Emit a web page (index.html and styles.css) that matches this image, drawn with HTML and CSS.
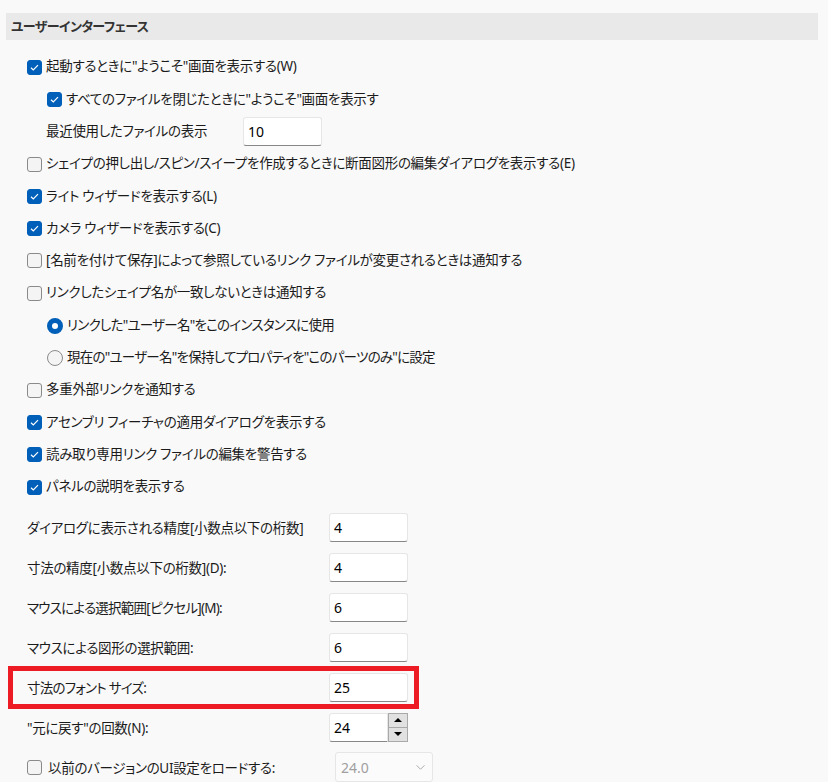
FILE: index.html
```
<!DOCTYPE html>
<html lang="ja">
<head>
<meta charset="utf-8">
<title>ユーザーインターフェース</title>
<link rel="stylesheet" href="styles.css">
</head>
<body>
<div class="panel">
  <div class="section-title">ユーザーインターフェース</div>
  <div class="options">
    <div class="row"><span class="cb on"><svg viewBox="0 0 15 15"><path d="M4 7.8 L6.3 10 L11 5.2"/></svg></span><span class="txt">起動するときに"ようこそ"画面を表示する(W)</span></div>
    <div class="row sub"><span class="cb on"><svg viewBox="0 0 15 15"><path d="M4 7.8 L6.3 10 L11 5.2"/></svg></span><span class="txt">すべてのファイルを閉じたときに"ようこそ"画面を表示す</span></div>
    <div class="row sub2"><span class="txt recent-label">最近使用したファイルの表示</span><span class="input recent">10</span></div>
    <div class="row"><span class="cb"></span><span class="txt">シェイプの押し出し/スピン/スイープを作成するときに断面図形の編集ダイアログを表示する(E)</span></div>
    <div class="row"><span class="cb on"><svg viewBox="0 0 15 15"><path d="M4 7.8 L6.3 10 L11 5.2"/></svg></span><span class="txt">ライト ウィザードを表示する(L)</span></div>
    <div class="row"><span class="cb on"><svg viewBox="0 0 15 15"><path d="M4 7.8 L6.3 10 L11 5.2"/></svg></span><span class="txt">カメラ ウィザードを表示する(C)</span></div>
    <div class="row"><span class="cb"></span><span class="txt">[名前を付けて保存]によって参照しているリンク ファイルが変更されるときは通知する</span></div>
    <div class="row"><span class="cb"></span><span class="txt">リンクしたシェイプ名が一致しないときは通知する</span></div>
    <div class="row sub"><span class="rb on"></span><span class="txt tight">リンクした"ユーザー名"をこのインスタンスに使用</span></div>
    <div class="row sub"><span class="rb"></span><span class="txt tight">現在の"ユーザー名"を保持してプロパティを"このパーツのみ"に設定</span></div>
    <div class="row"><span class="cb"></span><span class="txt">多重外部リンクを通知する</span></div>
    <div class="row"><span class="cb on"><svg viewBox="0 0 15 15"><path d="M4 7.8 L6.3 10 L11 5.2"/></svg></span><span class="txt">アセンブリ フィーチャの適用ダイアログを表示する</span></div>
    <div class="row"><span class="cb on"><svg viewBox="0 0 15 15"><path d="M4 7.8 L6.3 10 L11 5.2"/></svg></span><span class="txt">読み取り専用リンク ファイルの編集を警告する</span></div>
    <div class="row"><span class="cb on"><svg viewBox="0 0 15 15"><path d="M4 7.8 L6.3 10 L11 5.2"/></svg></span><span class="txt">パネルの説明を表示する</span></div>
  </div>
  <div class="fields">
    <div class="field"><span class="flabel">ダイアログに表示される精度[小数点以下の桁数]</span><span class="input">4</span></div>
    <div class="field"><span class="flabel">寸法の精度[小数点以下の桁数](D):</span><span class="input">4</span></div>
    <div class="field"><span class="flabel tight">マウスによる選択範囲[ピクセル](M):</span><span class="input">6</span></div>
    <div class="field"><span class="flabel">マウスによる図形の選択範囲:</span><span class="input">6</span></div>
    <div class="field highlight"><span class="flabel tight">寸法のフォント サイズ:</span><span class="input">25</span></div>
    <div class="field"><span class="flabel">"元に戻す"の回数(N):</span><span class="spin"><span class="input spin-text">24</span><span class="spin-btns"><span class="sbtn"><span class="tri up"></span></span><span class="sbtn"><span class="tri down"></span></span></span></span></div>
    <div class="field last"><span class="cb"></span><span class="flabel last-label">以前のバージョンのUI設定をロードする:</span><span class="select">24.0<svg class="chev" viewBox="0 0 12 8"><path d="M1.5 1.5 L6 6 L10.5 1.5"/></svg></span></div>
  </div>
</div>
</body>
</html>
```
FILE: styles.css
```
html { overflow: hidden; }
body {
  margin: 0;
  background: #f9f9f9;
  color: #1b1b1b;
  font-family: "Noto Sans", "Noto Sans CJK JP", sans-serif;
  font-size: 13.5px;
  letter-spacing: -0.3px;
  font-feature-settings: "palt";
}
.panel {
  padding: 13px 10px 0 6px;
}
.section-title {
  height: 27px;
  line-height: 27px;
  background: #e9e9e9;
  padding-left: 5px;
  font-weight: 700;
  font-size: 13px;
  letter-spacing: -0.6px;
  color: #333;
}
.options {
  padding: 11px 0 0 21px;
}
.row {
  height: 32.3px;
  display: flex;
  align-items: center;
}
.row.sub { padding-left: 20px; }
.row.sub2 { padding-left: 19px; }
.txt { white-space: nowrap; line-height: 1; }
.tight { letter-spacing: -0.75px; }
.cb {
  width: 15px;
  height: 15px;
  box-sizing: border-box;
  border: 1px solid #8a8a8a;
  border-radius: 3px;
  background: #f4f4f4;
  margin-right: 4px;
  flex: none;
  display: flex;
}
.cb.on {
  background: #005fb8;
  border-color: #005fb8;
}
.cb svg {
  width: 15px;
  height: 15px;
  margin: -1px;
  fill: none;
  stroke: #fff;
  stroke-width: 1.2;
}
.rb {
  width: 16px;
  height: 16px;
  box-sizing: border-box;
  border: 1px solid #8a8a8a;
  border-radius: 50%;
  background: #f4f4f4;
  margin-right: 4px;
  flex: none;
}
.rb.on {
  border: 5px solid #005fb8;
  background: #fff;
}
.recent-label { width: 197px; }
.input {
  display: block;
  box-sizing: border-box;
  width: 79px;
  height: 29px;
  line-height: 27px;
  background: #fff;
  border: 1px solid #e6e6e6;
  border-bottom-color: #878787;
  border-radius: 3px;
  padding-left: 4px;
  font-size: 14px;
  letter-spacing: 0;
  color: #000;
  flex: none;
}
.fields {
  margin-top: 4.3px;
  padding-left: 21px;
}
.field {
  height: 40px;
  display: flex;
  align-items: center;
  position: relative;
  width: 381px;
}
.field.last { width: auto; }
.flabel {
  width: 302px;
  white-space: nowrap;
  flex: none;
}
.highlight::after {
  content: "";
  position: absolute;
  left: -19px;
  right: -11px;
  top: -1px;
  bottom: -2px;
  border: 5px solid #ed1c24;
  pointer-events: none;
}
.spin {
  display: flex;
  width: 79px;
  height: 29px;
  flex: none;
}
.spin-text {
  width: 59px;
  border-radius: 3px 0 0 3px;
}
.spin-btns {
  width: 20px;
  display: flex;
  flex-direction: column;
}
.sbtn {
  flex: 1;
  box-sizing: border-box;
  background: #e1e1e1;
  border: 1px solid #a9a9a9;
  display: flex;
  align-items: center;
  justify-content: center;
}
.sbtn + .sbtn { border-top: none; }
.tri {
  width: 0;
  height: 0;
  border-left: 4px solid transparent;
  border-right: 4px solid transparent;
}
.tri.up { border-bottom: 4px solid #000; }
.tri.down { border-top: 4px solid #000; }
.field.last .cb { margin-right: 6px; }
.last-label { width: 287px; }
.select {
  box-sizing: border-box;
  width: 98px;
  height: 30px;
  flex: none;
  border: 1px solid #e6e6e6;
  border-radius: 3px;
  background: #fbfbfb;
  color: #a0a0a0;
  padding-left: 5px;
  display: flex;
  align-items: center;
  justify-content: space-between;
  padding-right: 6px;
  font-size: 14px;
  letter-spacing: 0;
}
.chev {
  width: 11px;
  height: 7px;
  fill: none;
  stroke: #a0a0a0;
  stroke-width: 1;
}
```
